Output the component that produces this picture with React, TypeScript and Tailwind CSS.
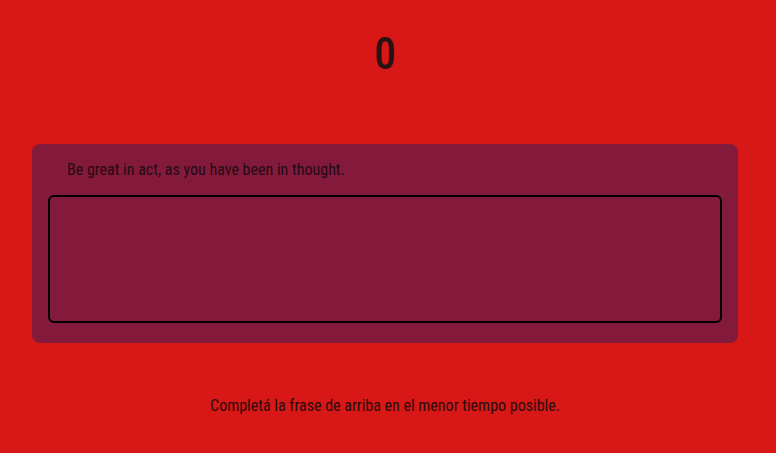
export default function App() {
  return (
    <div
      className="w-[776px] h-[453px] bg-[#d81717]"
      style={{ fontFamily: '"Roboto Condensed", "Liberation Sans Narrow", Roboto, sans-serif' }}
    >
      <div className="w-[770px] flex flex-col items-center">
        <div className="mt-[26px] h-[56px] flex items-center text-[44px] font-medium text-[#2a1212] leading-none">0</div>
        <div className="mt-[62px] w-[706px] h-[199px] bg-[#831a3c] rounded-[8px] px-[16px] pt-[15px]">
          <div className="pl-[19px] text-[16px] leading-[22px] text-[#230b12]">
            Be great in act, as you have been in thought.
          </div>
          <textarea className="mt-[14px] block w-[674px] h-[128px] border-2 border-black rounded-[6px] bg-transparent resize-none outline-none" />
        </div>
        <div className="mt-[52px] text-[16px] leading-[22px] text-[#2a0c0c]">
          Completá la frase de arriba en el menor tiempo posible.
        </div>
      </div>
    </div>
  );
}
